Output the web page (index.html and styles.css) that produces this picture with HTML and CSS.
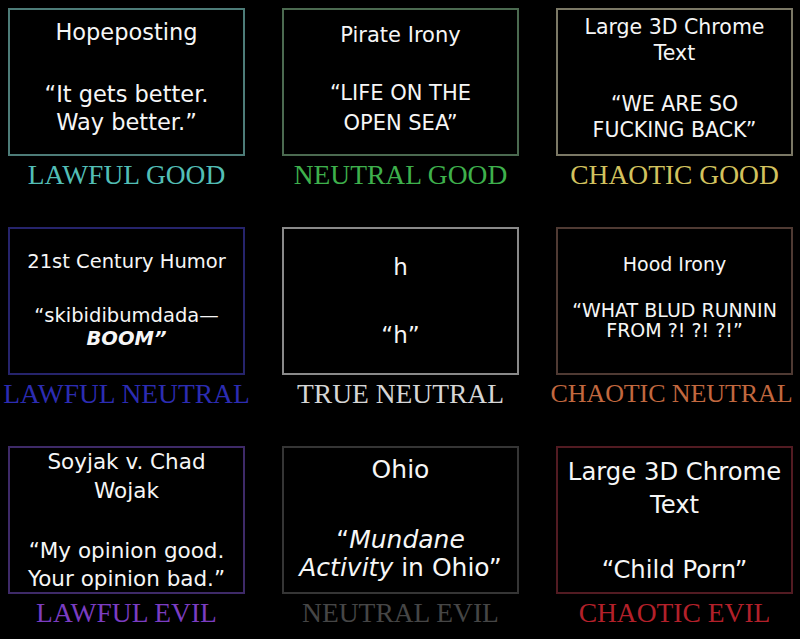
FILE: index.html
```html
<!DOCTYPE html>
<html lang="en">
<head>
<meta charset="utf-8">
<title>Alignment Chart</title>
<link rel="stylesheet" href="styles.css">
</head>
<body>
<main class="chart">
  <section class="cell">
    <div class="box c1 b-teal">
      <p class="title">Hopeposting</p>
      <p class="quote">“It gets better.<br>Way better.”</p>
    </div>
    <div class="label l-teal"><span>LAWFUL GOOD</span></div>
  </section>
  <section class="cell">
    <div class="box c2 b-green">
      <p class="title">Pirate Irony</p>
      <p class="quote">“LIFE ON THE<br>OPEN SEA”</p>
    </div>
    <div class="label l-green"><span>NEUTRAL GOOD</span></div>
  </section>
  <section class="cell">
    <div class="box c3 b-yellow">
      <p class="title">Large 3D Chrome<br>Text</p>
      <p class="quote">“WE ARE SO<br>FUCKING BACK”</p>
    </div>
    <div class="label l-yellow"><span>CHAOTIC GOOD</span></div>
  </section>

  <section class="cell">
    <div class="box c4 b-blue">
      <p class="title">21st Century Humor</p>
      <p class="quote">“skibidibumdada—<br><b><i>BOOM”</i></b></p>
    </div>
    <div class="label l-blue"><span>LAWFUL NEUTRAL</span></div>
  </section>
  <section class="cell">
    <div class="box c5 b-gray">
      <p class="title">h</p>
      <p class="quote">“h”</p>
    </div>
    <div class="label l-light"><span>TRUE NEUTRAL</span></div>
  </section>
  <section class="cell">
    <div class="box c6 b-brown">
      <p class="title">Hood Irony</p>
      <p class="quote">“WHAT BLUD RUNNIN<br>FROM ?! ?! ?!”</p>
    </div>
    <div class="label label-edge l-orange"><span>CHAOTIC NEUTRAL</span></div>
  </section>

  <section class="cell">
    <div class="box c7 b-purple">
      <p class="title">Soyjak v. Chad<br>Wojak</p>
      <p class="quote">“My opinion good.<br>Your opinion bad.”</p>
    </div>
    <div class="label l-purple"><span>LAWFUL EVIL</span></div>
  </section>
  <section class="cell">
    <div class="box c8 b-dark">
      <p class="title">Ohio</p>
      <p class="quote">“<i>Mundane<br>Activity</i> in Ohio”</p>
    </div>
    <div class="label l-dark"><span>NEUTRAL EVIL</span></div>
  </section>
  <section class="cell">
    <div class="box c9 b-red">
      <p class="title">Large 3D Chrome<br>Text</p>
      <p class="quote">“Child Porn”</p>
    </div>
    <div class="label l-red"><span>CHAOTIC EVIL</span></div>
  </section>
</main>
</body>
</html>
```

FILE: styles.css
```css
html, body {
  margin: 0;
  padding: 0;
  background: #000;
}

body {
  width: 800px;
  height: 639px;
  overflow: hidden;
}

.chart {
  display: grid;
  grid-template-columns: repeat(3, 237px);
  grid-auto-rows: 219px;
  column-gap: 37px;
  padding: 8px 0 0 8px;
}

.cell {
  display: flex;
  flex-direction: column;
}

.box {
  box-sizing: border-box;
  height: 148px;
  border: 2px solid #777;
  text-align: center;
  color: #f6f6f6;
  font-family: "DejaVu Sans", "Liberation Sans", sans-serif;
  overflow: visible;
  white-space: nowrap;
}

.box p {
  margin: 0;
}

.label {
  display: flex;
  justify-content: center;
  margin-top: 5px;
  font-family: "Liberation Serif", "Times New Roman", serif;
  font-size: 27.5px;
  line-height: 27.5px;
  white-space: nowrap;
}

.label-edge {
  font-size: 26px;
  letter-spacing: -0.1px;
  padding-right: 6px;
}

/* per-cell typography */
.c1 { font-size: 22.5px; line-height: 28px; padding-top: 8px; }
.c1 .quote { margin-top: 34px; }

.c2 { font-size: 21px; line-height: 30px; padding-top: 9.5px; }
.c2 .quote { margin-top: 28px; }

.c3 { font-size: 20.5px; line-height: 26px; padding-top: 4px; }
.c3 .quote { margin-top: 25px; }

.c4 { font-size: 19.5px; line-height: 23.5px; padding-top: 21px; }
.c4 .quote { margin-top: 30px; }

.c5 { font-size: 23px; line-height: 28px; padding-top: 24px; }
.c5 .quote { margin-top: 40px; }

.c6 { font-size: 19px; line-height: 20px; padding-top: 24.5px; }
.c6 .quote { margin-top: 26px; }

.c7 { font-size: 21.5px; line-height: 28.5px; padding-top: 0; }
.c7 .quote { margin-top: 31.5px; }

.c8 { font-size: 25px; line-height: 28.5px; padding-top: 7.5px; }
.c8 .quote { margin-top: 41.5px; }

.c9 { font-size: 24.3px; line-height: 33px; padding-top: 7px; }
.c9 .quote { margin-top: 32px; }

/* border colours */
.b-teal   { border-color: #4d7c78; }
.b-green  { border-color: #4b6a50; }
.b-yellow { border-color: #7b7865; }
.b-blue   { border-color: #26246c; }
.b-gray   { border-color: #8a8a8a; }
.b-brown  { border-color: #4f3a33; }
.b-purple { border-color: #3e2a68; }
.b-dark   { border-color: #353535; }
.b-red    { border-color: #521b22; }

/* label colours */
.l-teal   { color: #52beb6; }
.l-green  { color: #3eb04c; }
.l-yellow { color: #d2c25e; }
.l-blue   { color: #2c2cb2; }
.l-light  { color: #d6d6d6; }
.l-orange { color: #c2683f; }
.l-purple { color: #7b3dc2; }
.l-dark   { color: #464646; }
.l-red    { color: #b3202a; }
```
